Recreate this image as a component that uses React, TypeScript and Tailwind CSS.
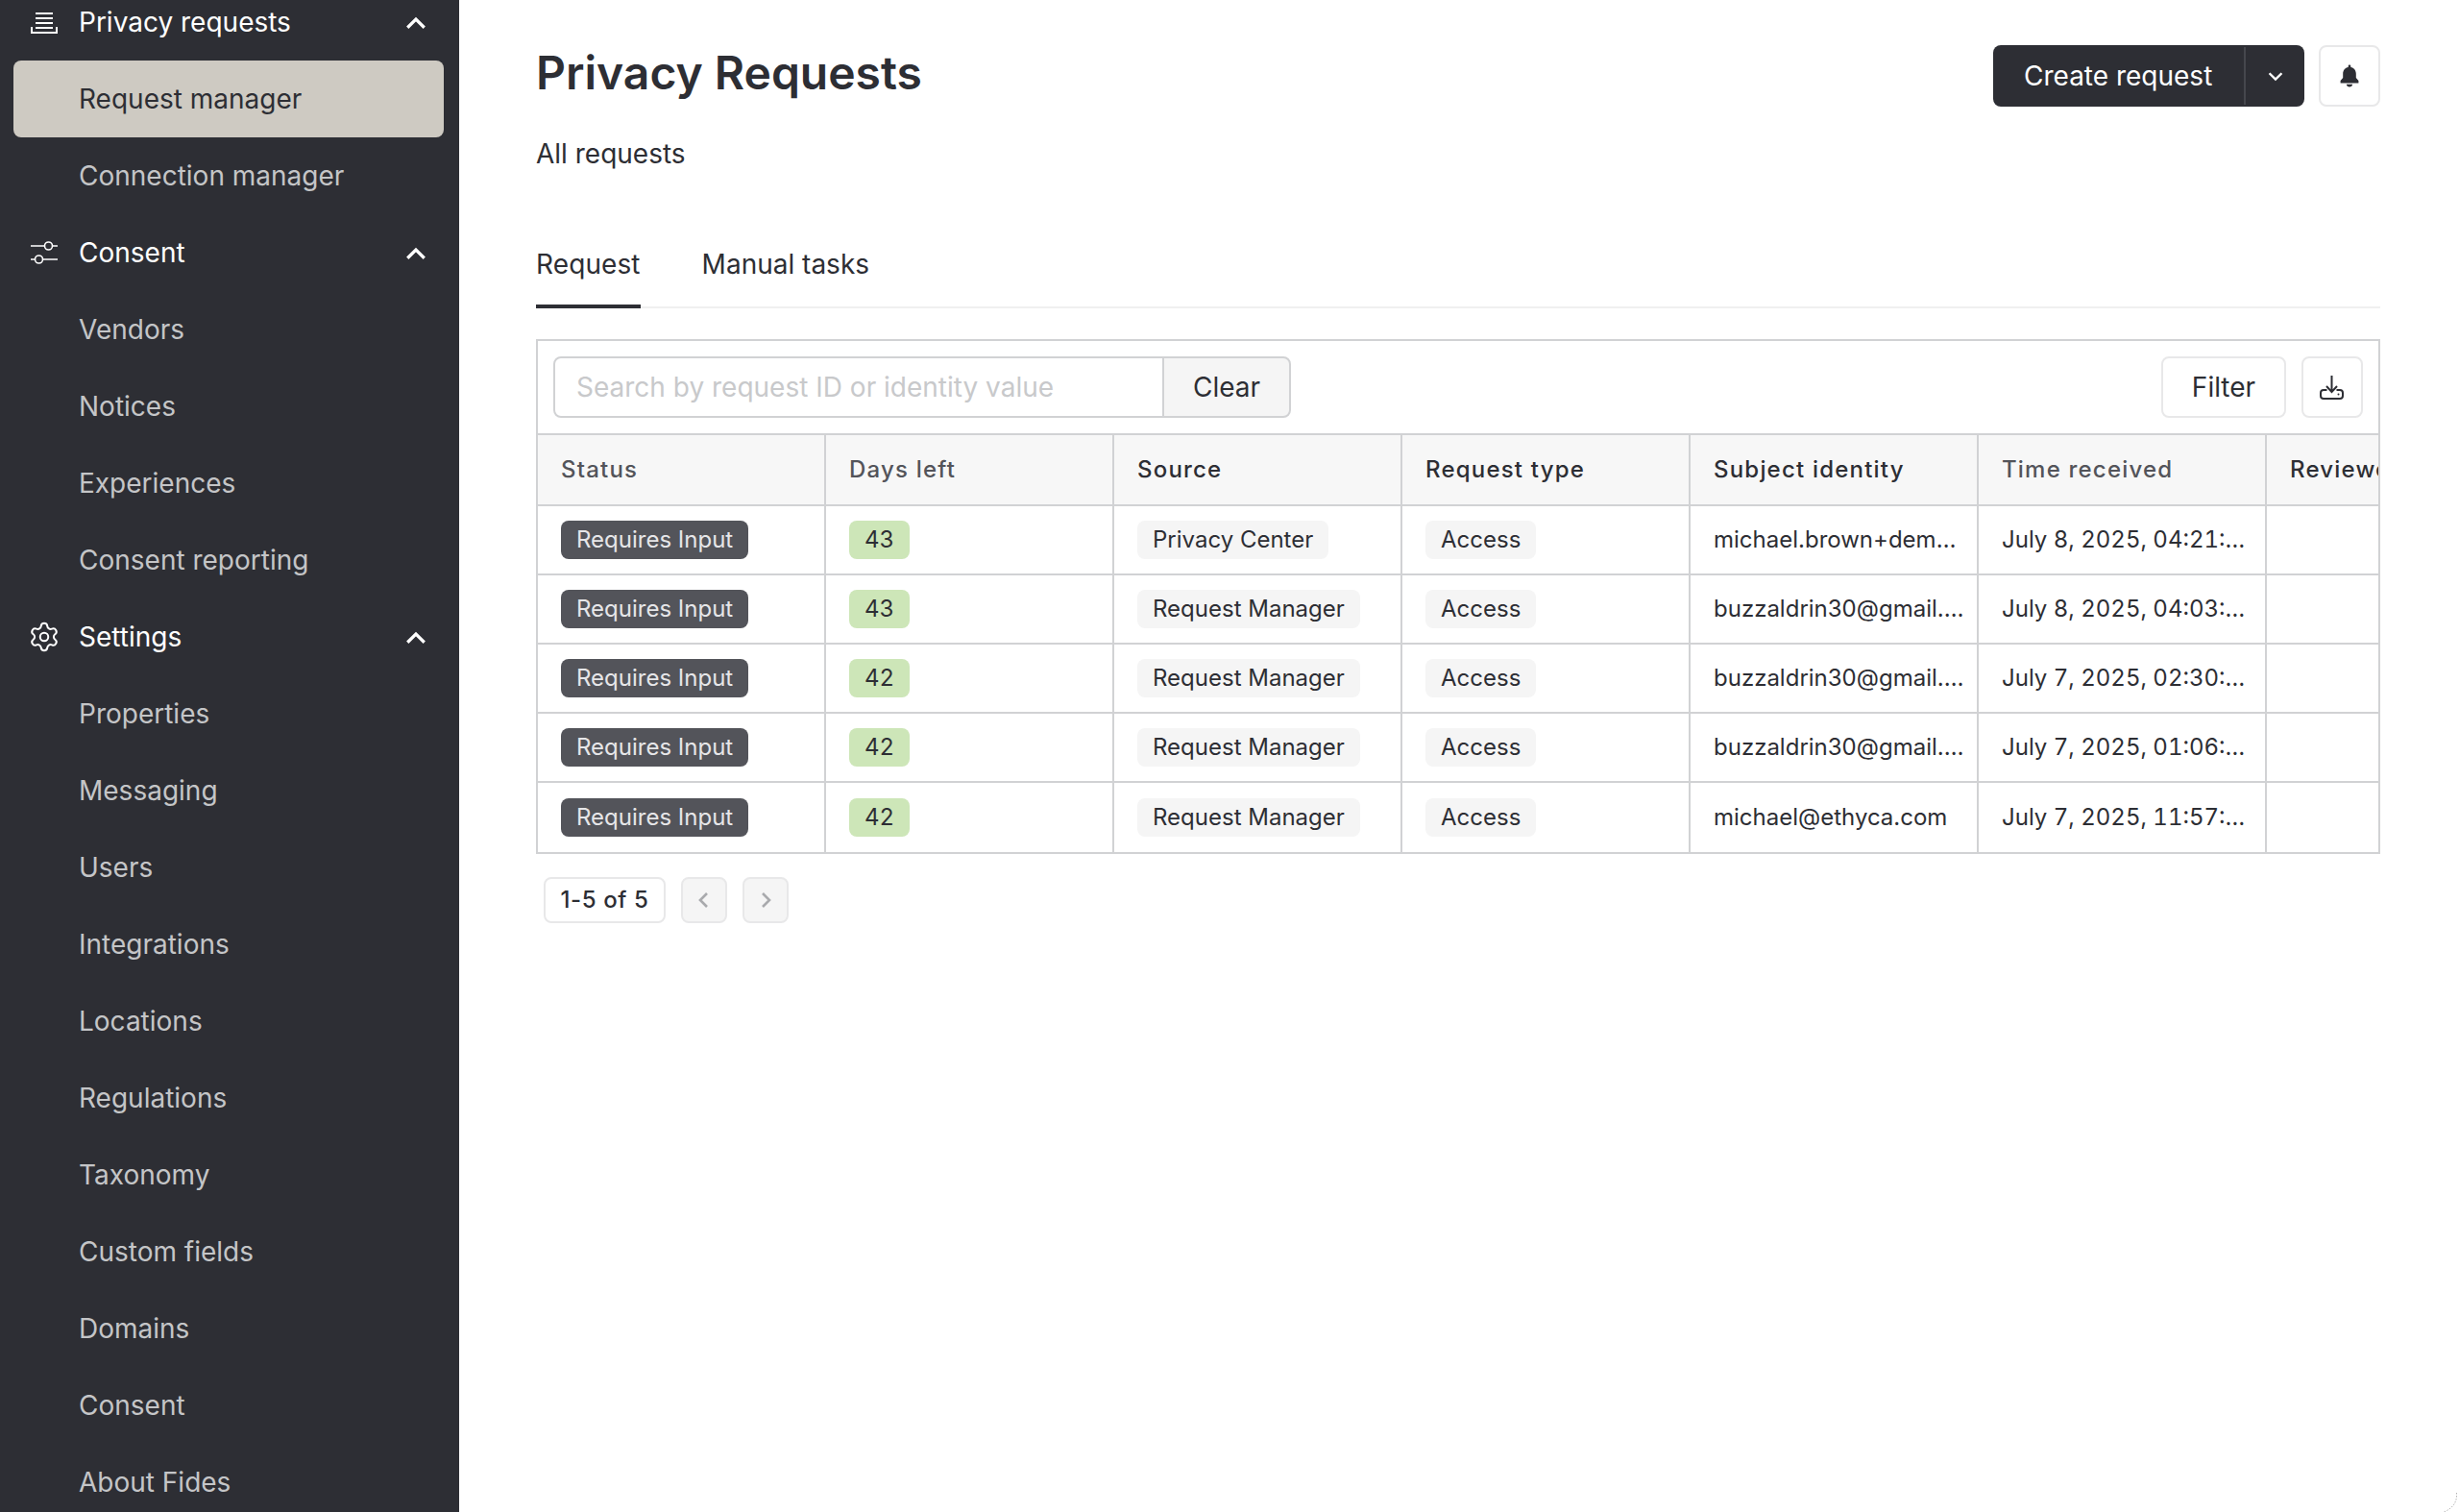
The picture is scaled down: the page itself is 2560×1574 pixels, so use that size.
import { Settings } from "lucide-react";

function Chevron({ dir = "up", className = "", sw = "2.6" }: { dir?: "up" | "down" | "left" | "right"; className?: string; sw?: string }) {
  const d = { up: "M5 15l7-7 7 7", down: "M5 9l7 7 7-7", left: "M15 5l-7 7 7 7", right: "M9 5l7 7-7 7" }[dir];
  return (
    <svg viewBox="0 0 24 24" fill="none" stroke="currentColor" strokeWidth={sw} className={className}>
      <path d={d} />
    </svg>
  );
}

function RequestsIcon() {
  return (
    <svg viewBox="0 0 28 24" fill="none" stroke="currentColor" strokeWidth="2" className="w-[28px] h-[24px]">
      <path d="M5 3h18M5 8h18M5 13h18M5 18h18M1 17v6h26v-6" />
    </svg>
  );
}

function SlidersIcon() {
  return (
    <svg viewBox="0 0 28 24" fill="none" stroke="currentColor" strokeWidth="1.6" className="w-[28px] h-[24px]">
      <path d="M0 5h14M23 5h5M0 19h4M13 19h15" />
      <circle cx="18.5" cy="5" r="4" />
      <circle cx="8.5" cy="19" r="4" />
    </svg>
  );
}

function BellIcon() {
  return (
    <svg viewBox="0 0 20 24" fill="currentColor" className="w-[20px] h-[24px]">
      <path d="M10 0.5c.7 0 1.2.5 1.300 1.300v1.100c3.400.7 5.500 3.300 5.500 6.900v4.300l2.600 3v2.400H.6v-2.400l2.600-3V9.800c0-3.600 2.100-6.200 5.500-6.900V1.800C8.800 1 9.300.5 10 .5zM6.900 20.800h6.200C13 22.500 11.700 23.500 10 23.500s-3-1-3.100-2.700z" />
    </svg>
  );
}

function DownloadIcon() {
  return (
    <svg viewBox="0 0 26 26" fill="none" stroke="currentColor" strokeWidth="2" className="w-[26px] h-[26px]">
      <path d="M12.500 1v17M7 12l5.500 6 5.500-6M7.500 16H4a3 3 0 0 0-3 3v3a3 3 0 0 0 3 3h17a3 3 0 0 0 3-3v-3a3 3 0 0 0-3-3h-3.500" />
      <circle cx="19.500" cy="20.500" r="1" fill="currentColor" stroke="none" />
    </svg>
  );
}

function NavHead({ icon, label }: { icon: React.ReactNode; label: string }) {
  return (
    <div className="h-[80px] flex items-center pl-[32px] pr-[30px] text-[28px] text-white">
      <span className="w-[28px] flex justify-center mr-[22px]">{icon}</span>
      <span className="flex-1">{label}</span>
      <Chevron dir="up" className="w-[30px] h-[30px] translate-y-[2px]" />
    </div>
  );
}

function NavItem({ label, active = false }: { label: string; active?: boolean }) {
  return (
    <div
      className={
        active
          ? "h-[80px] ml-[14px] mr-[16px] rounded-[8px] bg-[#cecac2] flex items-center pl-[68px] text-[28px] text-[#2d2e34]"
          : "h-[80px] ml-[14px] mr-[16px] flex items-center pl-[68px] text-[28px] text-[#c4c5c7]"
      }
    >
      {label}
    </div>
  );
}

function Tag({ children, kind = "plain" }: { children: React.ReactNode; kind?: "dark" | "green" | "plain" }) {
  const cls =
    kind === "dark"
      ? "bg-[#53545a] text-[#e6e6e8]"
      : kind === "green"
        ? "bg-[#cde6b8] text-[#2d2e34] tabular-nums"
        : "bg-[#f5f5f5] text-[#2d2e34]";
  return (
    <span className={`inline-flex items-center h-[40px] px-[16px] rounded-[8px] text-[24px] leading-none ${cls}`}>
      {children}
    </span>
  );
}

const rows = [
  { days: 43, source: "Privacy Center", subject: "michael.brown+demo@example.com", time: "July 8, 2025, 04:21:16 PM" },
  { days: 43, source: "Request Manager", subject: "buzzaldrin30@gmail.com", time: "July 8, 2025, 04:03:22 PM" },
  { days: 42, source: "Request Manager", subject: "buzzaldrin30@gmail.com", time: "July 7, 2025, 02:30:41 PM" },
  { days: 42, source: "Request Manager", subject: "buzzaldrin30@gmail.com", time: "July 7, 2025, 01:06:09 PM" },
  { days: 42, source: "Request Manager", subject: "michael@ethyca.com", time: "July 7, 2025, 11:57:30 AM" },
];

const heads = [
  { t: "Status", c: "text-[#53545a]" },
  { t: "Days left", c: "text-[#53545a]" },
  { t: "Source", c: "text-[#2d2e34]" },
  { t: "Request type", c: "text-[#2d2e34]" },
  { t: "Subject identity", c: "text-[#2d2e34]" },
  { t: "Time received", c: "text-[#53545a]" },
  { t: "Reviewer", c: "text-[#2d2e34]" },
];

const tdBase = "w-[300px] px-[24px] border-r-2 border-[#d1d2d4] align-middle text-[24px]";

export default function App() {
  return (
    <div
      className="relative w-[2560px] h-[1574px] flex overflow-hidden bg-white text-[#2d2e34]"
      style={{ fontFamily: "Inter, 'Liberation Sans', sans-serif" }}
    >
      <aside className="w-[478px] shrink-0 overflow-hidden bg-[#2d2e34]">
        <div className="-mt-[17px]">
          <NavHead icon={<RequestsIcon />} label="Privacy requests" />
          <NavItem label="Request manager" active />
          <NavItem label="Connection manager" />
          <NavHead icon={<SlidersIcon />} label="Consent" />
          <NavItem label="Vendors" />
          <NavItem label="Notices" />
          <NavItem label="Experiences" />
          <NavItem label="Consent reporting" />
          <NavHead icon={<Settings size={34} strokeWidth={1.4} className="shrink-0" />} label="Settings" />
          {["Properties", "Messaging", "Users", "Integrations", "Locations", "Regulations", "Taxonomy", "Custom fields", "Domains", "Consent", "About Fides"].map((l) => (
            <NavItem key={l} label={l} />
          ))}
        </div>
      </aside>

      <main className="flex-1 min-w-0 bg-white pt-[47px] pl-[80px] pr-[82px]">
        <div className="flex justify-between items-start h-[64px]">
          <h1 className="text-[48px] font-semibold leading-[58px]">Privacy Requests</h1>
          <div className="flex items-center gap-[15px]">
            <div className="flex h-[64px] rounded-[8px] bg-[#2d2e34] text-white items-center">
              <span className="w-[261px] pl-[32px] text-[28px]">Create request</span>
              <span className="w-[2px] h-[60px] bg-[#45474d]" />
              <span className="w-[61px] flex justify-center">
                <Chevron dir="down" className="w-[22px] h-[22px]" />
              </span>
            </div>
            <button className="w-[64px] h-[64px] rounded-[8px] border-2 border-[#e8e8e9] bg-white flex items-center justify-center">
              <BellIcon />
            </button>
          </div>
        </div>

        <p className="mt-[32px] text-[28px] leading-[34px]">All requests</p>

        <div className="mt-[63px] h-[81px] flex gap-[64px] border-b-2 border-[#f0f0f0] text-[28px]">
          <div className="h-[79px] relative pt-[14px] tracking-[0.1px]">
            Request
            <span className="absolute left-0 right-0 bottom-[-2px] h-[4px] bg-[#2d2e34]" />
          </div>
          <div className="h-[79px] pt-[14px]">Manual tasks</div>
        </div>

        <section className="mt-[32px] border-2 border-[#d1d2d4] border-r-0 overflow-hidden relative">
          <div className="h-[98px] flex items-center pl-[16px] pr-[18px] border-b-2 border-[#d1d2d4]">
            <div className="w-[636px] h-[64px] border-2 border-[#d1d2d4] rounded-l-[8px] pl-[22px] flex items-center text-[28px] text-[#c8c9cb]">
              Search by request ID or identity value
            </div>
            <button className="w-[134px] h-[64px] -ml-[2px] border-2 border-[#d1d2d4] rounded-r-[8px] bg-[#f5f5f5] text-[28px]">
              Clear
            </button>
            <div className="flex-1" />
            <button className="w-[130px] h-[64px] border-2 border-[#e8e8e9] rounded-[8px] bg-white text-[28px]">Filter</button>
            <button className="w-[64px] h-[64px] ml-[16px] border-2 border-[#e8e8e9] rounded-[8px] bg-white flex items-center justify-center">
              <DownloadIcon />
            </button>
          </div>
          <div className="absolute top-0 bottom-0 right-0 w-[2px] bg-[#d1d2d4]" />
          <table className="table-fixed w-[2100px] border-separate border-spacing-0">
            <thead>
              <tr>
                {heads.map((h) => (
                  <th key={h.t} className={`h-[74px] w-[300px] px-[24px] text-left bg-[#f7f7f7] border-r-2 border-b-2 border-[#d1d2d4] text-[24px] font-medium tracking-[1.2px] ${h.c}`}>
                    {h.t}
                  </th>
                ))}
              </tr>
            </thead>
            <tbody>
              {rows.map((r, i) => {
                const td = i === rows.length - 1 ? `${tdBase} h-[72px]` : `${tdBase} h-[72px] border-b-2`;
                return (
                  <tr key={i}>
                    <td className={td}><Tag kind="dark">Requires Input</Tag></td>
                    <td className={td}><Tag kind="green">{r.days}</Tag></td>
                    <td className={td}><Tag>{r.source}</Tag></td>
                    <td className={td}><Tag>Access</Tag></td>
                    <td className={td}><div className="truncate w-[263px]">{r.subject}</div></td>
                    <td className={td}><div className="truncate w-[254px] tabular-nums">{r.time}</div></td>
                    <td className={td} />
                  </tr>
                );
              })}
            </tbody>
          </table>
        </section>

        <div className="mt-[24px] ml-[8px] flex items-center gap-[16px]">
          <div className="w-[127px] h-[48px] border-2 border-[#e8e8e9] rounded-[8px] flex items-center justify-center text-[24px] font-medium tracking-[0.6px]">
            1-5 of 5
          </div>
          <div className="w-[48px] h-[48px] border-2 border-[#e8e8e9] rounded-[8px] bg-[#f5f5f5] flex items-center justify-center text-[#a9aaad]">
            <Chevron dir="left" className="w-[24px] h-[24px]" />
          </div>
          <div className="w-[48px] h-[48px] border-2 border-[#e8e8e9] rounded-[8px] bg-[#f5f5f5] flex items-center justify-center text-[#a9aaad]">
            <Chevron dir="right" className="w-[24px] h-[24px]" />
          </div>
        </div>
      </main>

      <svg viewBox="0 0 30 30" fill="none" className="absolute right-0 bottom-0 w-[30px] h-[30px]">
        <path d="M27.500 10v3C27.500 21 22 27 14 30" stroke="#b5b5b5" strokeWidth="1" strokeDasharray="1.500 1.500" />
      </svg>
    </div>
  );
}
